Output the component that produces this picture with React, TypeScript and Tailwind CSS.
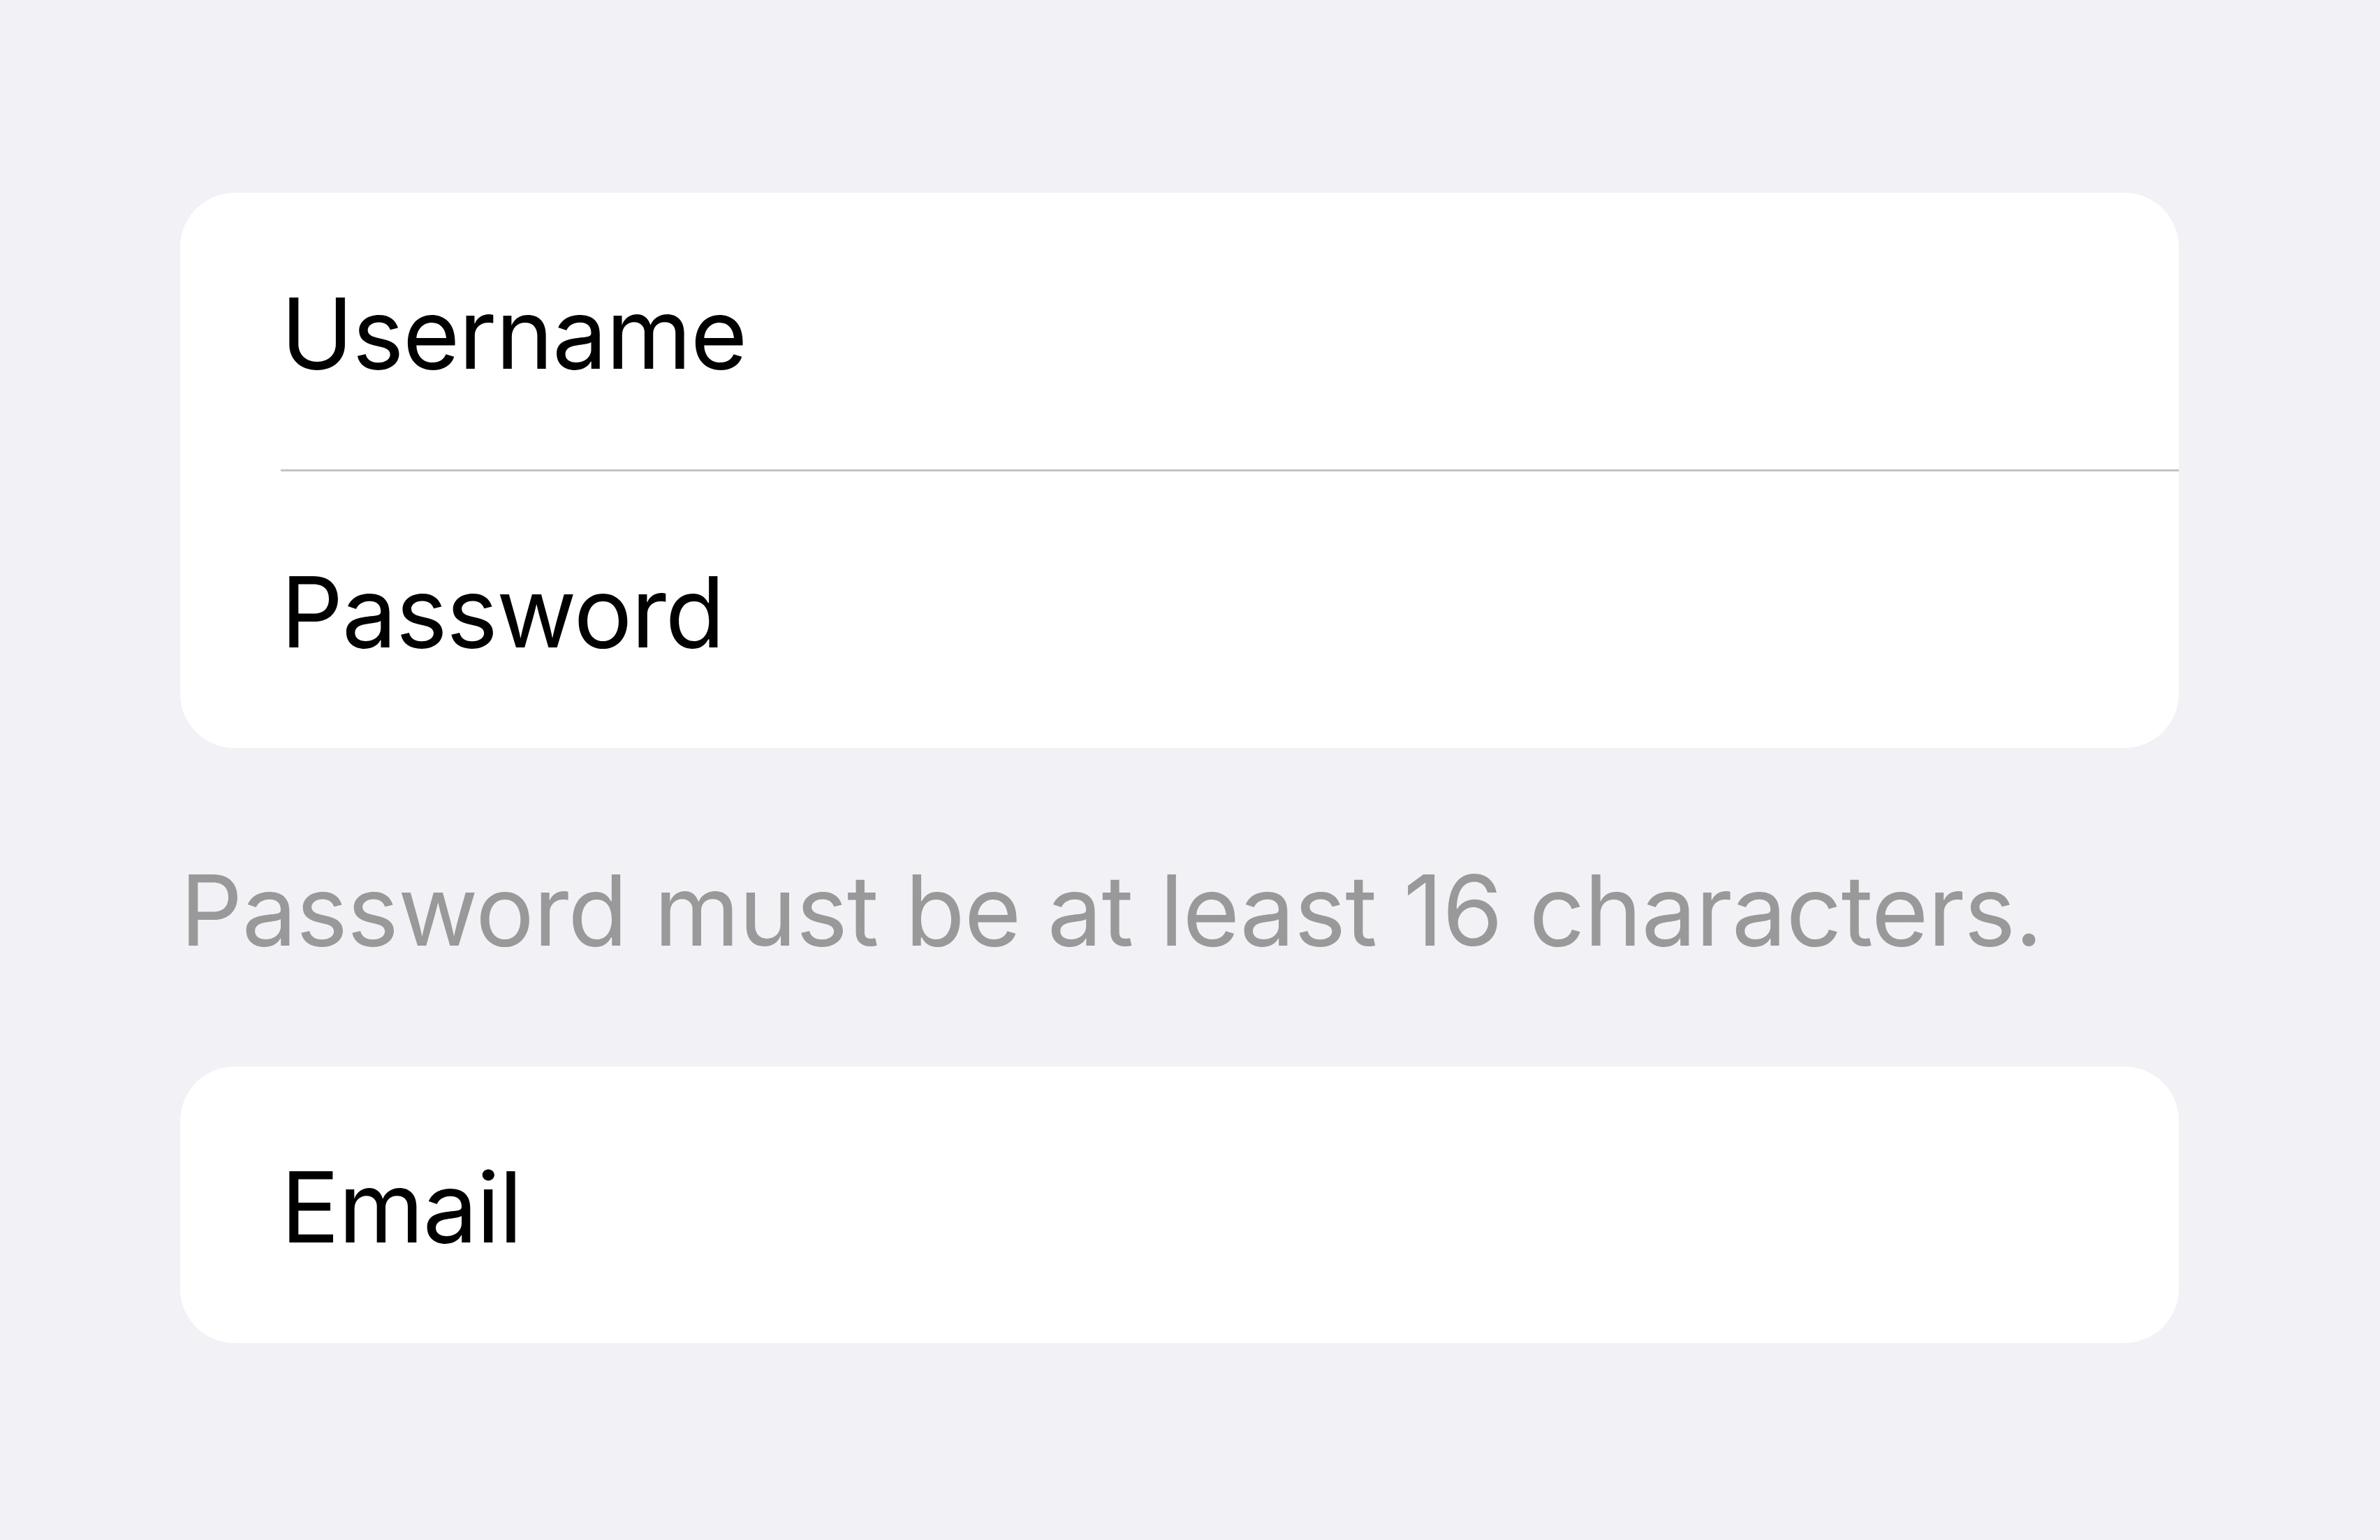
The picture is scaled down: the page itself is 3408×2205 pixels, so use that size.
import React from "react";

const font = { fontFamily: "Inter, 'Noto Sans', sans-serif" };

function Row({ label }: { label: string }) {
  return (
    <div className="flex h-[396px] items-center pl-[144px] pt-[6px]">
      <span className="text-[140px] leading-[140px] tracking-[-0.012em] text-black">{label}</span>
    </div>
  );
}

export default function App() {
  return (
    <div
      className="min-h-[2205px] w-full bg-[#f2f2f6] pl-[258px] pr-[288px] pt-[276px]"
      style={font}
    >
      <div className="overflow-hidden rounded-[78px] bg-white">
        <Row label="Username" />
        <div className="ml-[144px] h-[3px] bg-[#c4c4c8]" />
        <Row label="Password" />
      </div>
      <div className="h-[456px] pt-[162px]">
        <p className="text-[140px] leading-[140px] tracking-[-0.007em] text-[#999999]">
          Password must be at least 16 characters.
        </p>
      </div>
      <div className="overflow-hidden rounded-[78px] bg-white">
        <Row label="Email" />
      </div>
    </div>
  );
}
